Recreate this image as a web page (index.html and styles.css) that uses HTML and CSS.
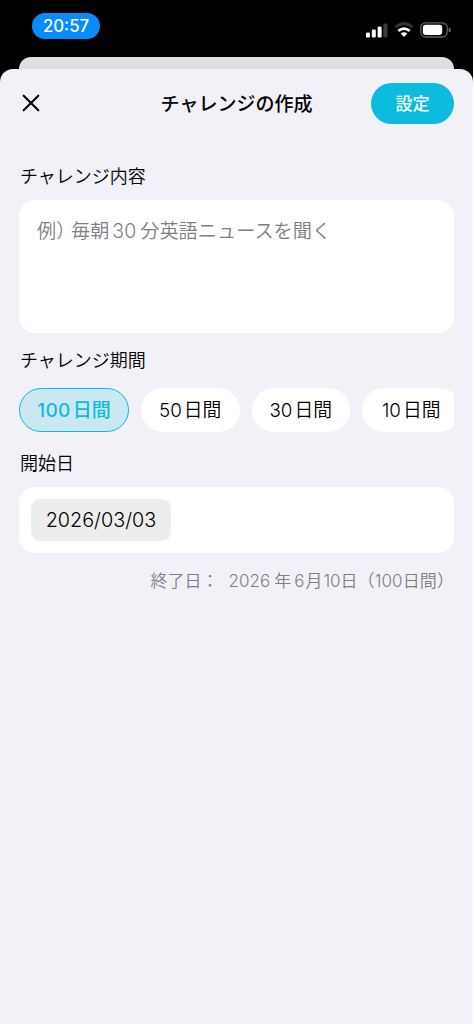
FILE: index.html
```html
<!DOCTYPE html>
<html lang="ja">
<head>
<meta charset="utf-8">
<title>チャレンジの作成</title>
<link rel="stylesheet" href="styles.css">
</head>
<body>
<div class="screen">
  <header class="status">
    <span class="clock">20:57</span>
    <div class="indicators">
      <svg class="signal" width="22" height="15" viewBox="0 0 22 15"><rect x="0" y="9.5" width="4" height="5" rx="1.3" fill="#fff"/><rect x="5.8" y="6.5" width="4" height="8" rx="1.3" fill="#fff"/><rect x="11.6" y="3.5" width="4" height="11" rx="1.3" fill="#fff"/><rect x="17.4" y="0.5" width="4" height="14" rx="1.3" fill="#3b3b3b"/></svg>
      <svg class="wifi" width="20" height="16" viewBox="0 0 20 16" fill="none"><path d="M1.5 5.2Q10-2 18.5 5.2" stroke="#333" stroke-width="3"/><path d="M4.3 8.9Q10 4.2 15.7 8.9" stroke="#fff" stroke-width="2.7"/><path d="M6.7 11.6Q10 8.8 13.3 11.6L10 15Z" fill="#fff"/></svg>
      <svg class="battery" width="31" height="16" viewBox="0 0 31 16"><rect x=".8" y=".8" width="26.4" height="14.2" rx="4.8" fill="none" stroke="#626262" stroke-width="1.3"/><rect x="2.8" y="2.8" width="19.4" height="10.2" rx="3" fill="#fff"/><path d="M28.7 5.5Q31 6 31 8T28.7 10.5Z" fill="#626262"/></svg>
    </div>
  </header>
  <div class="behind"></div>
  <main class="sheet">
    <div class="bar">
      <svg class="close" width="18" height="18" viewBox="0 0 18 18"><path d="M1.7 1.7 16.3 16.3M16.3 1.7 1.7 16.3" stroke="#000" stroke-width="2.1" stroke-linecap="round"/></svg>
      <h1 class="title">チャレンジの作成</h1>
      <button class="submit">設定</button>
    </div>
    <h2 class="label">チャレンジ内容</h2>
    <div class="content-field">例<span class="close-paren">）</span>毎朝<span class="count">30</span>分英語ニュースを聞く</div>
    <h2 class="label label-period">チャレンジ期間</h2>
    <div class="periods">
      <button class="chip chip-selected"><span class="num">100</span>日間</button>
      <button class="chip"><span class="num">50</span>日間</button>
      <button class="chip"><span class="num">30</span>日間</button>
      <button class="chip"><span class="num">10</span>日間</button>
    </div>
    <h2 class="label label-start">開始日</h2>
    <div class="date-field"><span class="date">2026/03/03</span></div>
    <p class="end"><span class="end-label">終了日：</span><span>2026<span class="year">年</span>6<span class="month">月</span>10日</span><span class="paren">（100日間）</span></p>
  </main>
</div>
</body>
</html>
```
FILE: styles.css
```css
* { box-sizing: border-box; }
body { margin: 0; background: #fff; font-family: Inter, "Noto Sans CJK JP", sans-serif; color: #000; }
.screen { width: 473px; height: 1024px; background: #000; overflow: hidden; display: flex; flex-direction: column; }
.status { height: 57px; flex: none; display: flex; justify-content: space-between; padding: 13px 22px 0 32px; }
.clock { width: 68px; height: 26px; border-radius: 13px; background: #078cff; color: #fff; font-size: 16.8px; font-weight: 500; line-height: 26px; text-align: center; }
.indicators { display: flex; align-items: flex-start; padding-top: 9px; }
.signal { margin: 1px 6px 0 0; }
.wifi { margin-right: 6px; }
.behind { height: 12px; flex: none; margin: 0 19px; background: #dfdfdf; border-radius: 12px 12px 0 0; }
.sheet { flex: 1; background: #f2f1f7; border-radius: 13px 13px 0 0; padding: 14px 19px 0; }
.bar { display: grid; grid-template-columns: 83px 1fr 83px; align-items: center; height: 41px; }
.close { margin: -1px 0 0 3px; }
.title { margin: 3px 0 0; font-size: 19px; font-weight: 500; line-height: 38px; text-align: center; white-space: nowrap; }
.submit { width: 83px; height: 41px; border: 0; border-radius: 21px; padding: 0 0 1px; background: #0dbbdf; color: #fff; font: 500 17px/40px "Noto Sans CJK JP", sans-serif; }
.label { margin: 40px 0 10px 1px; height: 26px; font-size: 18px; font-weight: 350; line-height: 26px; }
.content-field { height: 133px; border-radius: 16px; background: #fff; padding: 17px 18px; color: #7f7f83; font-size: 19.2px; font-weight: 350; line-height: 28px; white-space: nowrap; }
.close-paren { letter-spacing: -4.4px; }
.count { margin: 0 4px 0 3px; font-size: 19.5px; }
.label-period { margin: 15px 0 14px 1px; }
.periods { display: flex; gap: 12px; overflow: hidden; }
.chip { width: 98.5px; height: 44px; flex: none; border: 0; border-radius: 22px; padding: 0; background: #fff; color: #000; font: 350 18.8px/45px Inter, "Noto Sans CJK JP", sans-serif; white-space: nowrap; }
.chip-selected { width: 110px; border: 1px solid #0dbbdf; background: #c9e8f2; color: #0dbbdf; font-weight: 500; font-size: 19px; line-height: 43px; }
.num { margin-right: 2px; }
.chip-selected .num { font-weight: 550; letter-spacing: .3px; }
.label-start { margin: 19px 0 10px 1px; }
.date-field { height: 66px; border-radius: 16px; background: #fff; padding: 12px; display: flex; }
.date { width: 140px; height: 42px; border-radius: 9px; background: #ededed; font-size: 19.8px; font-weight: 350; line-height: 42px; text-align: center; }
.end { margin: 15px 0 0; height: 26px; display: flex; justify-content: flex-end; color: #7f7f83; font-size: 17px; font-weight: 350; line-height: 27px; white-space: nowrap; }
.end-label { margin-right: 10px; }
.year { margin: 0 3px 0 4px; }
.month { margin: 0 1px; }
.paren { letter-spacing: .1px; }
```
